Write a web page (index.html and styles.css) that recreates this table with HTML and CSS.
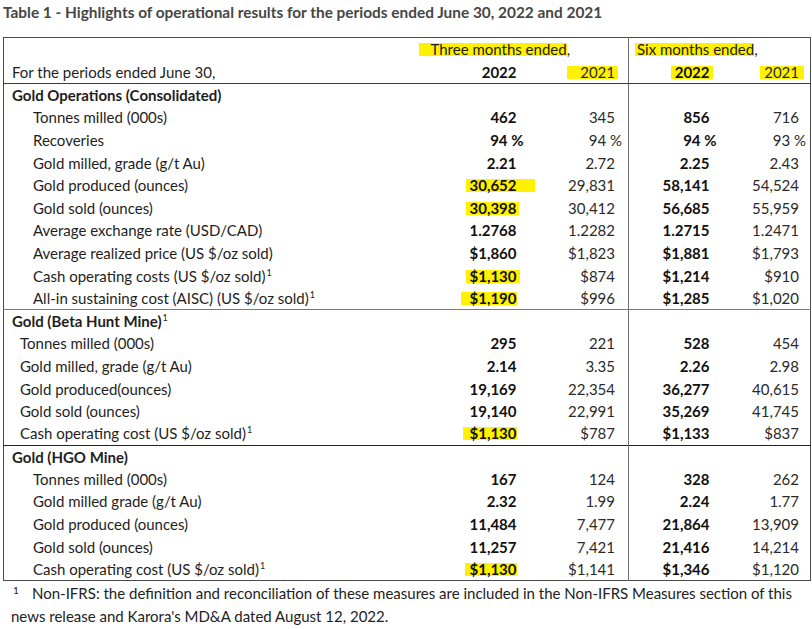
FILE: index.html
```html
<!DOCTYPE html>
<html lang="en">
<head>
<meta charset="utf-8">
<title>Table 1 - Highlights of operational results</title>
<link rel="stylesheet" href="styles.css">
</head>
<body>
<div class="page">
  <h1 class="title">Table 1 - Highlights of operational results for the periods ended June 30, 2022 and 2021</h1>
  <table class="ops">
    <colgroup>
      <col class="col-label"><col class="col-a"><col class="col-b"><col class="col-c"><col class="col-d">
    </colgroup>
    <thead>
      <tr class="hrow">
        <th class="lbl"></th>
        <th colspan="2" class="grp grp-a"><span class="hl hl-three">Three months ended</span>,</th>
        <th colspan="2" class="grp grp-b div"><span class="hl hl-six">Six months ended</span>,</th>
      </tr>
      <tr class="hrow hrow-last">
        <th class="lbl plain">For the periods ended June 30,</th>
        <th class="num na b">2022</th>
        <th class="num nb plain"><span class="hl hl-y21a">2021</span></th>
        <th class="num nc b div"><span class="hl hl-y22b">2022</span></th>
        <th class="num nd plain"><span class="hl hl-y21b">2021</span></th>
      </tr>
    </thead>
    <tbody class="sec">
      <tr><td class="sec-title" colspan="2">Gold Operations (Consolidated)</td><td class="nb"></td><td class="div nc"></td><td class="nd"></td></tr>
      <tr><td class="lbl ind2">Tonnes milled (000s)</td><td class="num na b">462</td><td class="num nb">345</td><td class="num nc b div">856</td><td class="num nd">716</td></tr>
      <tr><td class="lbl ind2">Recoveries</td><td class="num na b">94<span class="pct">&nbsp;%</span></td><td class="num nb">94<span class="pct">&nbsp;%</span></td><td class="num nc b div">94<span class="pct">&nbsp;%</span></td><td class="num nd">93<span class="pct">&nbsp;%</span></td></tr>
      <tr><td class="lbl ind2">Gold milled, grade (g/t Au)</td><td class="num na b">2.21</td><td class="num nb">2.72</td><td class="num nc b div">2.25</td><td class="num nd">2.43</td></tr>
      <tr><td class="lbl ind2">Gold produced (ounces)</td><td class="num na b"><span class="hl hl-652">30,652</span></td><td class="num nb">29,831</td><td class="num nc b div">58,141</td><td class="num nd">54,524</td></tr>
      <tr><td class="lbl ind2">Gold sold (ounces)</td><td class="num na b"><span class="hl hl-398">30,398</span></td><td class="num nb">30,412</td><td class="num nc b div">56,685</td><td class="num nd">55,959</td></tr>
      <tr><td class="lbl ind2">Average exchange rate (USD/CAD)</td><td class="num na b">1.2768</td><td class="num nb">1.2282</td><td class="num nc b div">1.2715</td><td class="num nd">1.2471</td></tr>
      <tr><td class="lbl ind2">Average realized price (US $/oz sold)</td><td class="num na b">$1,860</td><td class="num nb">$1,823</td><td class="num nc b div">$1,881</td><td class="num nd">$1,793</td></tr>
      <tr><td class="lbl ind2">Cash operating costs (US $/oz sold)<sup>1</sup></td><td class="num na b"><span class="hl hl-130a">$1,130</span></td><td class="num nb">$874</td><td class="num nc b div">$1,214</td><td class="num nd">$910</td></tr>
      <tr><td class="lbl ind2">All-in sustaining cost (AISC) (US $/oz sold)<sup>1</sup></td><td class="num na b"><span class="hl hl-190">$1,190</span></td><td class="num nb">$996</td><td class="num nc b div">$1,285</td><td class="num nd">$1,020</td></tr>
    </tbody>
    <tbody class="sec sec-beta">
      <tr><td class="sec-title" colspan="2">Gold (Beta Hunt Mine)<sup>1</sup></td><td class="nb"></td><td class="div nc"></td><td class="nd"></td></tr>
      <tr><td class="lbl ind1">Tonnes milled (000s)</td><td class="num na b">295</td><td class="num nb">221</td><td class="num nc b div">528</td><td class="num nd">454</td></tr>
      <tr><td class="lbl ind1">Gold milled, grade (g/t Au)</td><td class="num na b">2.14</td><td class="num nb">3.35</td><td class="num nc b div">2.26</td><td class="num nd">2.98</td></tr>
      <tr><td class="lbl ind1">Gold produced(ounces)</td><td class="num na b">19,169</td><td class="num nb">22,354</td><td class="num nc b div">36,277</td><td class="num nd">40,615</td></tr>
      <tr><td class="lbl ind1">Gold sold (ounces)</td><td class="num na b">19,140</td><td class="num nb">22,991</td><td class="num nc b div">35,269</td><td class="num nd">41,745</td></tr>
      <tr><td class="lbl ind1">Cash operating cost (US $/oz sold)<sup>1</sup></td><td class="num na b"><span class="hl hl-130b">$1,130</span></td><td class="num nb">$787</td><td class="num nc b div">$1,133</td><td class="num nd">$837</td></tr>
    </tbody>
    <tbody class="sec sec-hgo">
      <tr><td class="sec-title" colspan="2">Gold (HGO Mine)</td><td class="nb"></td><td class="div nc"></td><td class="nd"></td></tr>
      <tr><td class="lbl ind2">Tonnes milled (000s)</td><td class="num na b">167</td><td class="num nb">124</td><td class="num nc b div">328</td><td class="num nd">262</td></tr>
      <tr><td class="lbl ind2">Gold milled grade (g/t Au)</td><td class="num na b">2.32</td><td class="num nb">1.99</td><td class="num nc b div">2.24</td><td class="num nd">1.77</td></tr>
      <tr><td class="lbl ind2">Gold produced (ounces)</td><td class="num na b">11,484</td><td class="num nb">7,477</td><td class="num nc b div">21,864</td><td class="num nd">13,909</td></tr>
      <tr><td class="lbl ind2">Gold sold (ounces)</td><td class="num na b">11,257</td><td class="num nb">7,421</td><td class="num nc b div">21,416</td><td class="num nd">14,214</td></tr>
      <tr><td class="lbl ind2">Cash operating cost (US $/oz sold)<sup>1</sup></td><td class="num na b"><span class="hl hl-130c">$1,130</span></td><td class="num nb">$1,141</td><td class="num nc b div">$1,346</td><td class="num nd">$1,120</td></tr>
    </tbody>
  </table>
  <div class="footnote">
    <div class="fn-line"><span class="fn-mark">1</span><span class="fn-text">Non-IFRS: the definition and reconciliation of these measures are included in the Non-IFRS Measures section of this</span></div>
    <div class="fn-line"><span class="fn-text">news release and Karora's MD&amp;A dated August 12, 2022.</span></div>
  </div>
</div>
</body>
</html>
```

FILE: styles.css
```css
* { box-sizing: border-box; }

html, body {
  margin: 0;
  padding: 0;
  background: #ffffff;
}

body {
  font-family: "Lato", "Liberation Sans", sans-serif;
  font-size: 15px;
  color: #1e1e1e;
}

.page {
  padding: 3px 2px 0 3px;
  width: 812px;
}

.title {
  margin: 0;
  font-size: 15.4px;
  font-weight: 700;
  color: #464646;
  line-height: 18px;
  height: 34px;
}

.ops {
  border-collapse: collapse;
  table-layout: fixed;
  width: 807px;
  border: 1px solid #4a4a4a;
}

.col-label { width: 418px; }
.col-a { width: 103px; }
.col-b { width: 104px; }
.col-c { width: 90px; }
.col-d { width: 92px; }

th, td {
  padding: 0;
  font-weight: 400;
  line-height: 20px;
  white-space: nowrap;
  vertical-align: middle;
}

.hrow th { height: 23px; }
.hrow-last th { border-bottom: 1px solid #3a3a3a; }

tbody td { height: 22.6px; }

.lbl { text-align: left; padding-left: 8px; }
.ind1 { padding-left: 16px; }
.ind2 { padding-left: 29px; }

.sec-title {
  font-weight: 700;
  padding-left: 8px;
  text-align: left;
}

.sec-beta tr:first-child td { border-top: 1px solid #7a7a7a; }
.sec-hgo tr:first-child td { border-top: 1px solid #222; }

.div { border-left: 1px solid #707070; }

.grp { text-align: left; }
.grp-a { padding-left: 9px; }
.grp-b { padding-left: 8px; }

.num { text-align: right; color: #2a2a2a; }
.num.b { font-weight: 700; color: #111; }
.na { padding-right: 8px; }
.nb { padding-right: 13px; }
.nc { padding-right: 9px; }
.nd { padding-right: 11px; }

.pct { margin-right: -7px; }

sup {
  font-size: 9px;
  line-height: 0;
  vertical-align: 6px;
  font-weight: 400;
  margin-left: 1px;
}

.hl {
  background: linear-gradient(to bottom, transparent 14%, #fff100 14%, #fff100 90%, transparent 90%);
  padding: 0 3px;
  margin: 0 -3px;
}
.hl-three { padding-left: 12px; margin-left: -12px; padding-right: 0; margin-right: 0; }
.hl-six { padding-left: 2px; margin-left: -2px; padding-right: 0; margin-right: 0; }
.hl-y21a { padding-left: 13px; margin-left: -13px; }
.hl-y22b { padding-left: 4px; margin-left: -4px; }
.hl-y21b { padding-left: 4px; margin-left: -4px; padding-right: 5px; margin-right: -5px; }
.hl-652 { padding-right: 18px; margin-right: -18px; }
.hl-398 { padding-right: 2px; margin-right: -2px; }
.hl-190 { padding-left: 8px; margin-left: -8px; padding-right: 0; margin-right: 0; }
.hl-130b { padding-left: 6px; margin-left: -6px; padding-right: 0; margin-right: 0; }
.hl-130c { padding-left: 4px; margin-left: -4px; padding-right: 0; margin-right: 0; }

.footnote {
  padding: 1px 0 0 8px;
  color: #222;
}

.fn-line {
  display: flex;
  align-items: flex-start;
  height: 23px;
  line-height: 23px;
  white-space: nowrap;
}

.fn-mark {
  font-size: 10px;
  line-height: 12px;
  margin-top: 2px;
  margin-left: 2px;
  width: 19px;
  flex: none;
}
```
